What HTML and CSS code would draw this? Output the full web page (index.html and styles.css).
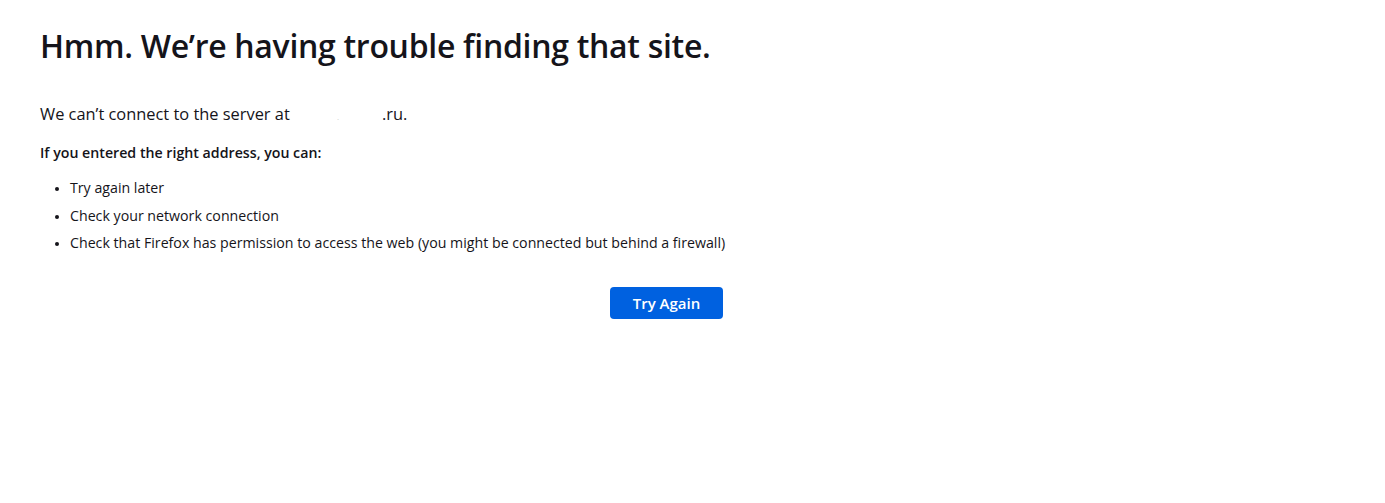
FILE: index.html
```html
<!DOCTYPE html>
<html lang="en">
<head>
  <meta charset="UTF-8">
  <title>Server Not Found</title>
  <link rel="stylesheet" href="styles.css">
</head>
<body>

  <div class="container">
    <h1 class="title">Hmm. We’re having trouble finding that site.</h1>

    <p class="intro">We can’t connect to the server at <span class="host">.</span>.ru.</p>

    <p class="hint">If you entered the right address, you can:</p>
    <ul class="tips">
      <li>Try again later</li>
      <li>Check your network connection</li>
      <li>Check that Firefox has permission to access the web (you might be connected but behind a firewall)</li>
    </ul>

    <div class="actions">
      <button class="retry">Try Again</button>
    </div>
  </div>

</body>
</html>
```

FILE: styles.css
```css
body { margin: 0; background: #fff; color: #15141a; font-family: "Open Sans", "Noto Sans", sans-serif; }
.container { width: 683px; padding: 24px 0 0 40px; }
.title { font-size: 32px; font-weight: 600; margin: 0; line-height: 44px; letter-spacing: -0.3px; }
.intro { font-size: 16.4px; margin: 35px 0 0; line-height: 22px; }
.host { display: inline-block; width: 88px; text-align: center; color: #ccc; font-size: 8px; }
.hint { font-size: 14.2px; font-weight: 600; margin: 15px 0 0; line-height: 20px; }
.tips { margin: 15px 0 0; padding-left: 30px; font-size: 14.2px; white-space: nowrap; }
.tips li { line-height: 20px; margin-bottom: 7.5px; }
.tips li::marker { font-size: 12px; }
.actions { display: flex; justify-content: flex-end; margin-top: 34px; }
.retry { background: #0061e0; color: #fff; border: none; border-radius: 4px; font-family: inherit; font-size: 15px; font-weight: 600; width: 113px; height: 32px; }
```
